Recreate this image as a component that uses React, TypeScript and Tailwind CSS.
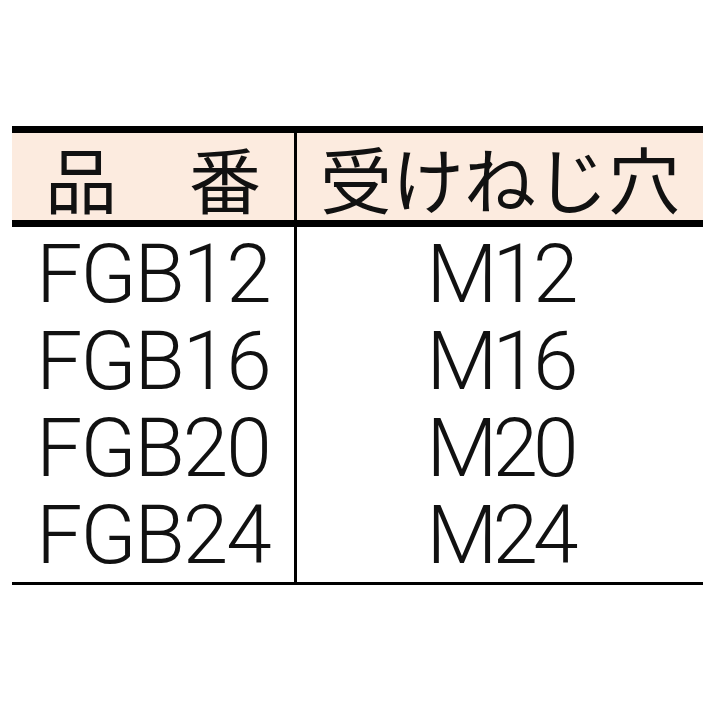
const rows = [
  { code: 'FGB12', thread: 'M12' },
  { code: 'FGB16', thread: 'M16' },
  { code: 'FGB20', thread: 'M20' },
  { code: 'FGB24', thread: 'M24' },
]

const jp = "font-['Noto_Sans_CJK_JP','Noto_Sans_CJK_SC',sans-serif]"
const latin = "font-['Roboto','Liberation_Sans',sans-serif] font-light"

export default function App() {
  return (
    <div className="h-[713px] w-[713px] bg-white pl-[12px] pt-[126px] text-[#111]">
      <div className="w-[691px] border-t-[7px] border-black">
        {/* header */}
        <div className={`flex h-[94px] border-b-[7px] border-black bg-[#fcebdf] ${jp}`}>
          <div className="flex w-[285px] items-center justify-center border-r-[3px] border-black text-[72px] leading-none">
            品　番
          </div>
          <div className="flex flex-1 items-center justify-center text-[72px] leading-none">
            受けねじ穴
          </div>
        </div>

        {/* body */}
        <div className={`flex border-b-[3px] border-black ${latin}`}>
          <div className="flex w-[285px] flex-col border-r-[3px] border-black pb-[3px] pt-[4px]">
            {rows.map((r) => (
              <div key={r.code} className="h-[87px] text-center text-[82px] leading-[87px] tracking-[-2px]">
                {r.code}
              </div>
            ))}
          </div>
          <div className="flex flex-1 flex-col pb-[3px] pt-[4px]">
            {rows.map((r) => (
              <div key={r.thread} className="h-[87px] text-center text-[82px] leading-[87px] tracking-[-5px]">
                {r.thread}
              </div>
            ))}
          </div>
        </div>
      </div>
    </div>
  )
}
